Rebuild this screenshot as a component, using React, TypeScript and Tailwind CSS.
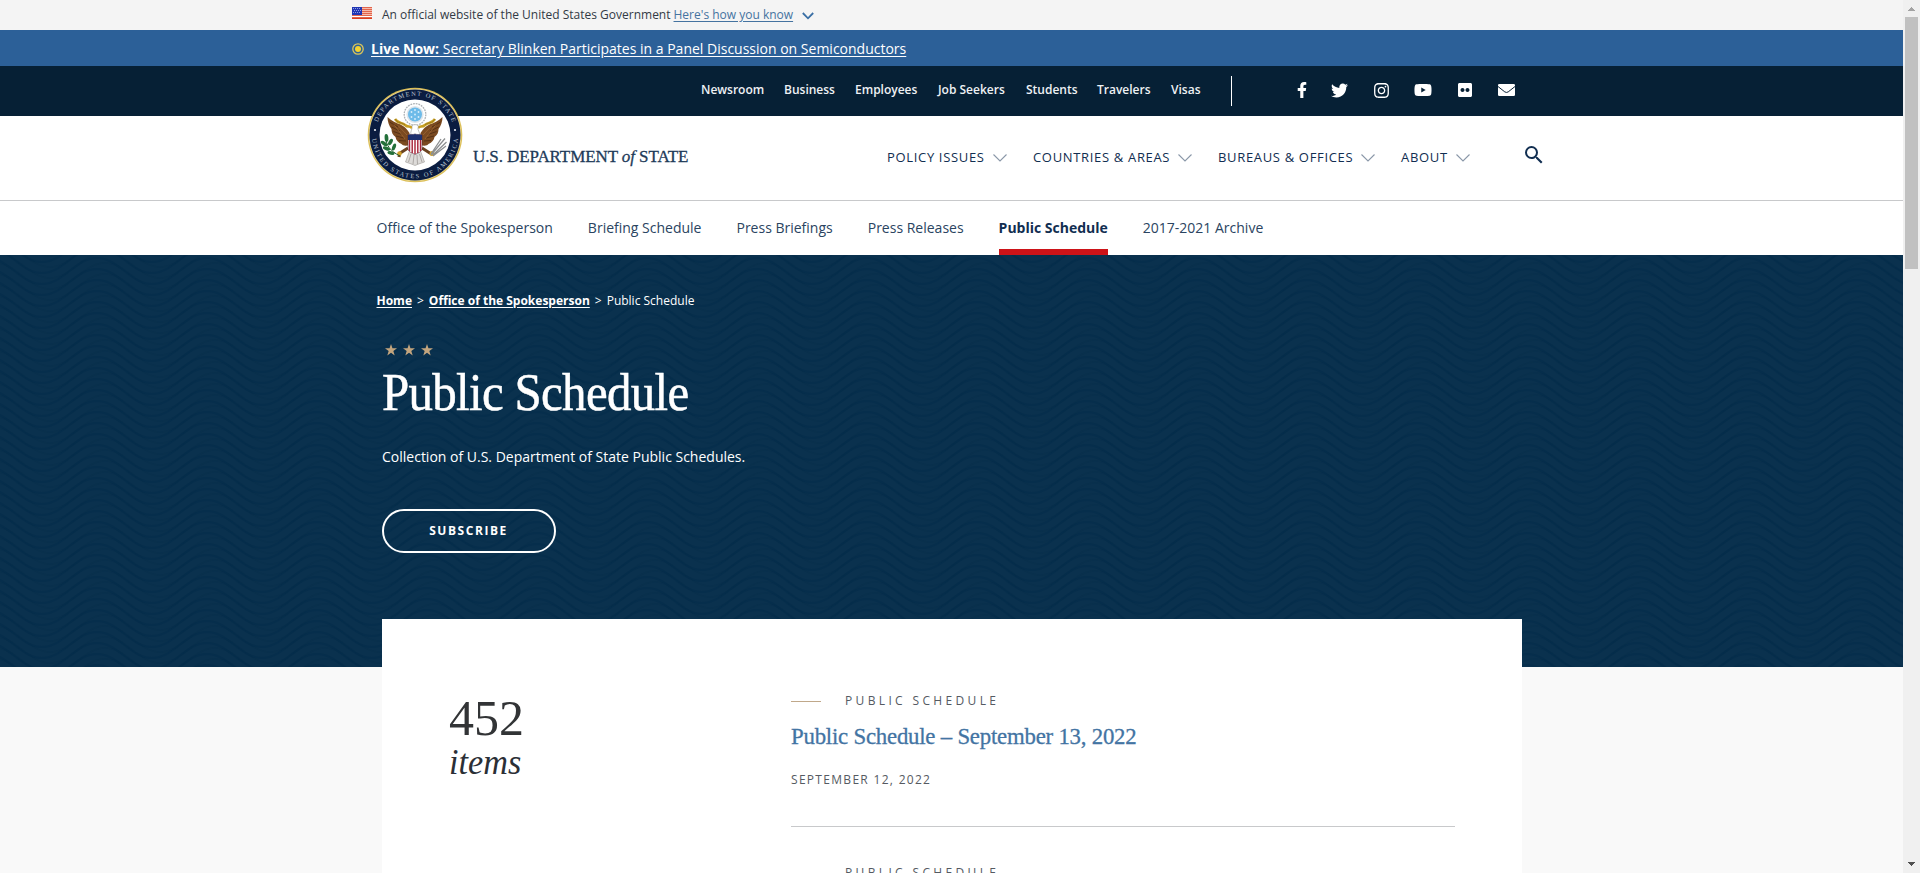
import React from "react";
import { FaFacebookF, FaTwitter, FaInstagram, FaYoutube, FaFlickr } from "react-icons/fa";
import { MdSearch } from "react-icons/md";

const SANS = "font-['Open_Sans',sans-serif]";

const utilityLinks = [
  { label: "Newsroom", width: "w-[83px]" },
  { label: "Business", width: "w-[71px]" },
  { label: "Employees", width: "w-[83px]" },
  { label: "Job Seekers", width: "w-[88px]" },
  { label: "Students", width: "w-[71px]" },
  { label: "Travelers", width: "w-[74px]" },
  { label: "Visas", width: "w-[60px]" },
];

const mainLinks = [
  { label: "POLICY ISSUES", width: "w-[146px]" },
  { label: "COUNTRIES & AREAS", width: "w-[185px]" },
  { label: "BUREAUS & OFFICES", width: "w-[183px]" },
  { label: "ABOUT", width: "w-[124px]" },
];

const sectionLinks = [
  { label: "Office of the Spokesperson" },
  { label: "Briefing Schedule" },
  { label: "Press Briefings" },
  { label: "Press Releases" },
  { label: "Public Schedule", active: true },
  { label: "2017-2021 Archive" },
];

function Flag() {
  return (
    <svg width="20" height="12" viewBox="0 0 20 12" shapeRendering="crispEdges">
      <rect width="20" height="12" fill="#f6b9a9" />
      {[0, 2, 4, 6, 8, 10].map((y) => (
        <rect key={y} y={y} width="20" height="1" fill="#e2654c" />
      ))}
      <rect y="9" width="20" height="1" fill="#ffffff" />
      <rect y="11" width="20" height="1" fill="#db3e1f" />
      <rect width="10" height="8" fill="#2036b4" />
      {[1, 3, 5].map((y) => [1, 3, 5, 7].map((x) => (
        <rect key={x + "-" + y} x={x + (y === 3 ? 1 : 0)} y={y} width="1" height="1" fill="#8f9be0" />
      )))}
    </svg>
  );
}

function Seal() {
  const wing = (
    <g>
      <path d="M22.5 32 C27 36 31 38 35.5 39.5 C39 41 42 44 44.5 48 L45 60 C41 61 38 61 36.500 59 C33 57.500 31 55 30.500 52 C27.500 50 26.500 47 26.500 44 C24 41 22.500 36 22.500 32Z" fill="#7b4a20" />
      <path d="M24.500 37 L33 42 M26.500 42 L35 46 M28.500 46.500 L37 49.500 M31 51 L39 53 M34 55.500 L41 56" stroke="#4b2a10" strokeWidth=".8" fill="none" />
      <path d="M29 39.500 L40 54 M33 40.500 L42 50" stroke="#a9713c" strokeWidth=".6" fill="none" />
    </g>
  );
  return (
    <svg width="100" height="100" viewBox="0 0 100 100">
      <defs>
        <path id="seal-top" d="M10.800 50 A39.200 39.200 0 0 1 89.200 50" />
        <path id="seal-bottom" d="M6.800 50 A43.200 43.200 0 0 0 93.200 50" />
      </defs>
      <circle cx="50" cy="50" r="47.300" fill="#dcbf58" />
      <circle cx="50" cy="50" r="46" fill="#efe0a6" />
      <circle cx="50" cy="50" r="45.500" fill="#0a1c40" />
      <circle cx="50" cy="50" r="35.500" fill="#ffffff" />
      <g fill="#bcc5d3" fontFamily="Liberation Serif, serif" fontSize="6.400">
        <text textAnchor="middle" textLength="97"><textPath href="#seal-top" startOffset="50%">DEPARTMENT OF STATE</textPath></text>
        <text textAnchor="middle" textLength="128"><textPath href="#seal-bottom" startOffset="50%">UNITED STATES OF AMERICA</textPath></text>
      </g>
      <circle cx="10" cy="45" r="1.100" fill="#e8ebf2" />
      <circle cx="90" cy="45" r="1.100" fill="#e8ebf2" />
      {wing}
      <g transform="translate(100 0) scale(-1 1)">{wing}</g>
      <path d="M30 34 C33 39 37 37 40 40 C43 43 45 40 47 43" stroke="#c79f22" strokeWidth="2.600" fill="none" />
      <path d="M70 34 C67 39 63 37 60 40 C57 43 55 40 53 43" stroke="#c79f22" strokeWidth="2.600" fill="none" />
      <path d="M30 34 C33 39 37 37 40 40 M70 34 C67 39 63 37 60 40" stroke="#73591a" strokeWidth=".5" fill="none" />
      <circle cx="50" cy="29.500" r="10.800" fill="#ffffff" stroke="#aeb2b6" strokeWidth="1.300" strokeDasharray="1.800 .9" />
      <circle cx="50" cy="29.500" r="8.600" fill="#dfe6ec" />
      <circle cx="50" cy="29.500" r="7" fill="#6dbbe9" />
      <g fill="#d8eefb">
        {[[50, 25], [46.500, 27], [53.500, 27], [50, 29.500], [46.500, 32], [53.500, 32], [50, 34]].map(([x, y]) => (
          <circle key={x + "-" + y} cx={x} cy={y} r=".9" />
        ))}
      </g>
      <path d="M46 50 C45 46 47.500 44.500 47 42 C46.500 40.500 48 39.500 50 39.700 C52.500 39.500 54 41 53 43 C52.500 45 55 47 54.500 50Z" fill="#ffffff" stroke="#979797" strokeWidth=".6" />
      <path d="M47 41.500 L44.500 43 L47 43.500Z" fill="#d7a51d" />
      <path d="M44.500 66 L55.500 66 L59.500 77 L55 78.500 L50 80.500 L45 78.500 L40.500 77Z" fill="#dddbd9" stroke="#8b8783" strokeWidth=".5" />
      <path d="M46 69 L43.500 77 M49 70 L48 79 M52 70 L52.500 79 M54.500 69 L57 77" stroke="#8b8783" strokeWidth=".6" />
      <path d="M43 63 L34.500 68.500 L34 72 M57 63 L65.500 68.500" stroke="#6b4320" strokeWidth="3" fill="none" />
      <circle cx="34.500" cy="68.500" r="2.300" fill="#d0a02a" />
      <circle cx="67" cy="68.500" r="2.500" fill="#d0a02a" />
      <path d="M21 53 C21 60 25 66 35 71" stroke="#1d5c2a" strokeWidth="1" fill="none" />
      <g fill="#23703a">
        <ellipse cx="21.500" cy="53" rx="1.900" ry="4" transform="rotate(-5 21.500 53)" />
        <ellipse cx="19" cy="58.500" rx="1.800" ry="3.800" transform="rotate(-55 19 58.500)" />
        <ellipse cx="25.500" cy="57" rx="1.800" ry="3.600" transform="rotate(30 25.500 57)" />
        <ellipse cx="21.500" cy="63.500" rx="1.800" ry="3.800" transform="rotate(-70 21.500 63.500)" />
        <ellipse cx="29" cy="62" rx="1.800" ry="3.600" transform="rotate(20 29 62)" />
        <ellipse cx="26" cy="68" rx="1.800" ry="3.600" transform="rotate(-80 26 68)" />
      </g>
      <path d="M66 70 L80 53.500 M66 69 L76 54 M68 70 L81.500 57 M68 71 L81 61" stroke="#8d8f91" strokeWidth="1.300" />
      <path d="M43 50 C46 49 47.500 50 50 49 C52.500 50 54 49 57 50 L57 64 C56.500 67 53 68 50 69.500 C47 68 43.500 67 43 64Z" fill="#ffffff" stroke="#4d2430" strokeWidth=".6" />
      <path d="M44.500 54 V66 M47.200 54 V68 M50 54 V69 M52.800 54 V68 M55.500 54 V66" stroke="#a82236" strokeWidth="1.400" />
      <path d="M43 50 C46 49 47.500 50 50 49 C52.500 50 54 49 57 50 L57 55 L43 55Z" fill="#1d2f6e" />
    </svg>
  );
}

function Waves() {
  const period = 110;
  const lines: string[] = [];
  for (let y = -30; y < 450; y += 11) {
    let d = `M-123 ${y}`;
    for (let x = -123; x < 1920; x += period) {
      d += " c22 0 33 26 55 26 s33 -26 55 -26";
    }
    lines.push(d);
  }
  return (
    <svg className="absolute inset-0" width="1903" height="412" viewBox="0 0 1903 412" fill="none">
      <g stroke="#032a4a" strokeOpacity=".42" strokeWidth="2">
        {lines.map((d, i) => <path key={i} d={d} />)}
      </g>
      <g stroke="#032a4a" strokeOpacity=".18" strokeWidth="1.500" transform="translate(8 5)">
        {lines.map((d, i) => <path key={i} d={d} />)}
      </g>
    </svg>
  );
}

function Chevron() {
  return (
    <svg width="14" height="8" viewBox="0 0 14 8" fill="none" stroke="#8a97a8" strokeWidth="1.100">
      <path d="M.5 .5 L7 7 L13.500 .5" />
    </svg>
  );
}

function Star() {
  return (
    <svg width="12" height="12" viewBox="0 0 12 12" fill="#c3a57e">
      <path d="M6 0 L7.450 4.300 H12 L8.350 7 L9.700 11.400 L6 8.700 L2.300 11.400 L3.650 7 L0 4.300 H4.550Z" />
    </svg>
  );
}

function Eyebrow() {
  return <p className="h-5 text-[12px] leading-5 tracking-[3.35px] text-[#555a62]">PUBLIC SCHEDULE</p>;
}

export default function App() {
  return (
    <div className={`${SANS} flex h-[873px] w-[1920px] overflow-hidden bg-[#f9f9f9] text-[#112e51]`}>
      <div className="flex w-[1903px] flex-col">
        <div className="flex h-[30px] shrink-0 items-start bg-[#f4f4f4] pl-[352px] text-[12px] leading-[29px] text-[#323a45]">
          <span className="mt-[7px] w-[30px]"><Flag /></span>
          <span>An official website of the United States Government</span>
          <a className="ml-[3px] text-[#4573a0] underline underline-offset-2">Here's how you know</a>
          <svg className="mt-[12px] ml-[9px]" width="12" height="8" viewBox="0 0 12 8" fill="none" stroke="#3a6fa5" strokeWidth="1.800">
            <path d="M.8 1 L6 6.300 L11.200 1" />
          </svg>
        </div>

        <div className="flex h-9 shrink-0 items-center bg-[#2c6098] pl-[352px] text-[14px] text-white">
          <svg className="mt-px mr-[7px]" width="12" height="12" viewBox="0 0 12 12">
            <circle cx="6" cy="6" r="5.200" fill="none" stroke="#dcc65a" strokeWidth="1.300" />
            <circle cx="6" cy="6" r="3" fill="#f6d32e" />
          </svg>
          <a className="pt-[2px] leading-8 underline underline-offset-2"><b>Live Now:</b> Secretary Blinken Participates in a Panel Discussion on Semiconductors</a>
        </div>

        <div className="flex h-[50px] shrink-0 items-start bg-[#062035] pl-[701px] text-[12px] font-semibold text-[#eef1f4]">
          <nav className="flex h-[47px] items-center">
            {utilityLinks.map((l) => <a key={l.label} className={`${l.width} whitespace-nowrap`}>{l.label}</a>)}
          </nav>
          <div className="mt-[10px] h-[30px] w-px bg-white" />
          <div className="ml-[64px] flex h-12 items-center text-white">
            <span className="w-[35px]"><FaFacebookF size={16} className="-ml-[2px]" /></span>
            <span className="w-[42px]"><FaTwitter size={17} /></span>
            <span className="w-[41px]"><FaInstagram size={17} /></span>
            <span className="w-[43px]"><FaYoutube size={18} /></span>
            <span className="w-[41px]"><FaFlickr size={16} /></span>
            <svg width="17" height="12" viewBox="0 0 17 12">
              <rect width="17" height="12" rx="1.300" fill="#ffffff" />
              <path d="M0 2.500 L6.800 7.900 Q8.500 9 10.200 7.900 L17 2.500" fill="none" stroke="#062035" strokeWidth="1" />
            </svg>
          </div>
        </div>

        <header className="flex h-[85px] shrink-0 border-b border-[#c8c9cb] bg-white pl-[365px]">
          <div className="z-10 -mt-[31px] h-[100px] w-[108px] shrink-0"><Seal /></div>
          <div className="mt-[27px] w-[414px] font-['Liberation_Serif',serif] text-[17px] leading-7 tracking-[-0.08px] whitespace-nowrap text-[#1d3a58] [-webkit-text-stroke:0.3px_#1d3a58]">
            U.S. DEPARTMENT <i>of</i> STATE
          </div>
          <nav className="flex h-[84px] items-center text-[13px] tracking-[0.67px]">
            {mainLinks.map((l) => (
              <a key={l.label} className={`${l.width} flex items-center gap-2 whitespace-nowrap`}>{l.label}<Chevron /></a>
            ))}
          </nav>
          <MdSearch size={24} className="mt-[27px] -ml-[3px] text-[#112e51]" />
        </header>

        <nav className="flex h-[54px] shrink-0 gap-[35px] bg-white pl-[376.6px] text-[14px] leading-[54px] text-[#2a4461]">
          {sectionLinks.map((l) => (
            <a key={l.label} className={l.active ? "h-[54px] border-b-[6px] border-[#cd1318] font-bold text-[#112e51]" : ""}>{l.label}</a>
          ))}
        </nav>

        <section className="relative h-[412px] shrink-0 bg-[#0a314e] text-white">
          <Waves />
          <div className="relative flex flex-col items-start pt-[36px] pl-[382px]">
            <nav className="-ml-[5.500px] flex h-5 gap-[5px] text-[12px] leading-5">
              <a className="font-bold underline underline-offset-2">Home</a>
              <span>&gt;</span>
              <a className="font-bold underline underline-offset-2">Office of the Spokesperson</a>
              <span>&gt;</span>
              <span>Public Schedule</span>
            </nav>
            <div className="mt-[33px] ml-[3px] flex gap-[6px]"><Star /><Star /><Star /></div>
            <h1 className="mt-[8px] origin-left scale-x-94 font-['Liberation_Serif',serif] text-[52px] leading-[58px] tracking-[-0.7px] [-webkit-text-stroke:0.5px_white]">Public Schedule</h1>
            <p className="mt-[25px] text-[14px] leading-5">Collection of U.S. Department of State Public Schedules.</p>
            <button className="mt-[42px] h-[44px] w-[174px] rounded-full border-2 border-white pr-[1px] text-[12px] font-bold tracking-[1.54px]">SUBSCRIBE</button>
          </div>
        </section>

        <main className="relative -mt-12 ml-[382px] flex h-[254px] w-[1140px] shrink-0 overflow-hidden bg-white">
          <div className="w-[409px] pt-[74px] pl-[67px] font-['Liberation_Serif',serif] text-[#323436]">
            <div className="text-[50px] leading-[50px]">452</div>
            <div className="mt-[1px] origin-left scale-x-95 text-[36px] leading-[36px] text-[#2b2f36] italic">items</div>
          </div>
          <div className="w-[664px] pt-[72px]">
            <div className="flex items-center">
              <span className="mr-[24px] h-px w-[30px] bg-[#c0a88a]" />
              <Eyebrow />
            </div>
            <h2 className="mt-[11px] origin-left scale-x-95 font-['Liberation_Serif',serif] text-[24px] leading-7 tracking-[-0.23px] whitespace-nowrap text-[#4374a3] [-webkit-text-stroke:0.3px_#4374a3]">Public Schedule – September 13, 2022</h2>
            <p className="mt-[20px] text-[12px] leading-5 tracking-[1.3px] text-[#555a62]">SEPTEMBER 12, 2022</p>
            <div className="mt-[36px] h-px bg-[#c8c9cb]" />
            <div className="mt-[36px] pl-[54px]"><Eyebrow /></div>
          </div>
        </main>
      </div>

      <div className="flex w-[17px] flex-col items-center bg-[#f0f0f0]">
        <svg className="mt-[7px]" width="7" height="4" viewBox="0 0 7 4" fill="#a3a3a3" shapeRendering="crispEdges"><path d="M3 0h1v1h1v1h1v1h1v1H0V3h1V2h1V1h1z" /></svg>
        <div className="mt-[6px] h-[252px] w-[13px] bg-[#c1c1c1]" />
        <svg className="mt-auto mb-[7px]" width="7" height="4" viewBox="0 0 7 4" fill="#505050" shapeRendering="crispEdges"><path d="M0 0h7v1H6v1H5v1H4v1H3V3H2V2H1V1H0z" /></svg>
      </div>
    </div>
  );
}
